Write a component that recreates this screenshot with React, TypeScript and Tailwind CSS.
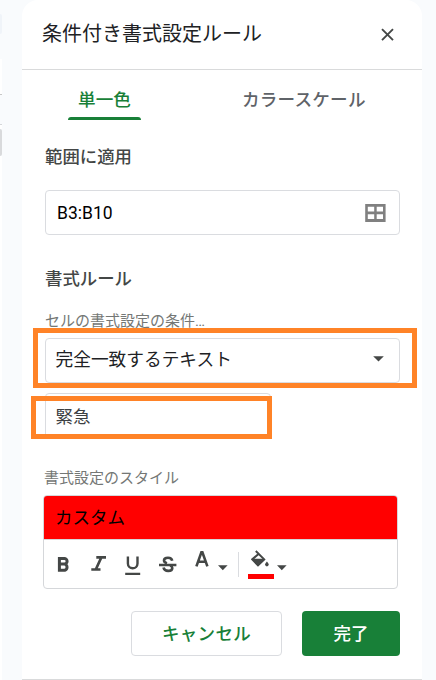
import React from "react";

function Caret() {
  return (
    <svg width="11" height="6" viewBox="0 0 11 6" className="shrink-0">
      <path d="M0.2 0.2H10.8L5.5 5.4Z" fill="#444746" />
    </svg>
  );
}

function SmallCaret() {
  return (
    <svg width="10" height="6" viewBox="0 0 10 6" className="shrink-0">
      <path d="M0 0.3H9.6L4.8 5.2Z" fill="#444746" />
    </svg>
  );
}

function GridIcon() {
  return (
    <svg width="21" height="18" viewBox="0 0 21 18" className="shrink-0">
      <path
        fillRule="evenodd"
        d="M0.2 0H20.6V18H0.2ZM2.8 2.8V7.6H9.2V2.8ZM11.7 2.8V7.6H18V2.8ZM2.8 10.2V15H9.2V10.2ZM11.7 10.2V15H18V10.2Z"
        fill="#808080"
      />
    </svg>
  );
}

function Toolbar() {
  return (
    <div className="flex h-[48px] items-start text-[#444746]">
      <svg width="13" height="15" viewBox="0 0 13 15" className="mt-[17px] ml-[13px]">
        <path d="M2.4 1.5H7.3A2.8 2.8 0 0 1 7.3 7.1H2.4ZM2.4 7.1H7.8A3.2 3.2 0 0 1 7.8 13.2H2.4Z" fill="none" stroke="currentColor" strokeWidth="3" />
      </svg>
      <svg width="15" height="15" viewBox="0 0 15 15" className="mt-[16px] ml-[21px]">
        <path d="M5.3 1.3H15M0.3 13.5H9.5M10.4 1.3L4.8 13.5" fill="none" stroke="currentColor" strokeWidth="2.7" />
      </svg>
      <svg width="16" height="19" viewBox="0 0 16 19" className="mt-[16px] ml-[19px]">
        <path d="M2.9 0.6V7.5A4.8 4.8 0 0 0 12.5 7.5V0.6" fill="none" stroke="currentColor" strokeWidth="2.4" />
        <path d="M0.2 17.8H15.2" stroke="currentColor" strokeWidth="2.2" />
      </svg>
      <svg width="18" height="17" viewBox="0 0 18 17" className="mt-[16px] ml-[18px]">
        <path d="M13.2 4.7C12.8 2.6 11.3 1.7 9 1.7C6.6 1.7 5 2.7 5 4.5C5 6 6.3 6.8 8 7.3M11.2 9.3C12.7 10.1 13.3 10.8 13.3 12C13.3 13.9 11.6 14.9 9.2 14.9C6.6 14.9 5 13.7 4.5 11.5" fill="none" stroke="currentColor" strokeWidth="2.6" />
        <path d="M0 9H17.4" stroke="currentColor" strokeWidth="2.3" />
      </svg>
      <svg width="14" height="16" viewBox="0 0 14 16" className="mt-[11px] ml-[18px]">
        <path d="M1.4 15.4L6.4 1.4H7.4L12.4 15.4M3 10.8H10.8" fill="none" stroke="currentColor" strokeWidth="2.6" />
      </svg>
      <div className="mt-[25px] ml-[9px]"><SmallCaret /></div>
      <div className="mt-[12px] ml-[10px] h-[25px] w-px bg-[#dadce0]" />
      <div className="mt-[10px] ml-[9px] flex h-[29px] w-[26px] flex-col justify-between">
        <svg width="20" height="18" viewBox="0 0 20 18" className="ml-[3px]">
          <path d="M4.8 1L13.2 9.4L7 15.3L1.2 9.4L7.8 3.8" fill="none" stroke="currentColor" strokeWidth="2" />
          <path d="M1 8.8H13.4L7 16Z" fill="currentColor" />
          <path d="M15.9 11.4C17.1 12.8 17.7 13.7 17.7 14.6A1.8 1.8 0 0 1 14.1 14.6C14.1 13.7 14.7 12.8 15.9 11.4Z" fill="currentColor" />
        </svg>
        <div className="h-[5px] bg-[#ff0000]" />
      </div>
      <div className="mt-[25px] ml-[3px]"><SmallCaret /></div>
    </div>
  );
}

export default function App() {
  return (
    <div
      className="flex h-[680px] w-[436px] overflow-hidden bg-[#f9fbfd] font-['Roboto','Noto_Sans_CJK_JP',sans-serif] text-[17.5px]"
      lang="ja"
    >
      <div className="mr-[20px] flex w-[2px] flex-col">
        <div className="mt-[14px] h-[20px] rounded-r-full bg-[#f0f4f9]" />
        <div className="mt-[25px] h-[36px] border-b border-[#c7c7c7] bg-white" />
        <div className="h-[30px] border-b border-[#d5d7da]" />
        <div className="h-[4px] bg-white" />
        <div className="h-[27px] rounded-r bg-[#d9dadc]" />
        <div className="flex-1 bg-white" />
      </div>

      <div className="flex w-[400px] flex-col rounded-t-[16px] border-b border-[#d9dadb] bg-white">
        <header className="flex h-[70px] items-center justify-between border-b border-[#d9dadb] pr-[28px] pl-[20px]">
          <h1 className="mb-[2px] text-[20px] leading-[30px] text-[#202124]">条件付き書式設定ルール</h1>
          <svg width="13" height="13" viewBox="0 0 13 13">
            <path d="M1 1.2L12 12.2M12 1.2L1 12.2" stroke="#444746" strokeWidth="1.9" />
          </svg>
        </header>

        <nav className="flex h-[50px] text-[17.6px] font-medium">
          <div className="ml-[46px] flex w-[73px] flex-col items-center justify-between text-[#188038]">
            <span className="mt-[17px] leading-[26px]">単一色</span>
            <div className="h-[3px] w-full rounded-t-[3px] bg-[#188038]" />
          </div>
          <span className="mt-[17px] ml-[101px] leading-[26px] tracking-[0.2px] text-[#5f6368]">カラースケール</span>
        </nav>

        <main className="flex flex-col pl-[23px]">
          <h2 className="mt-[24px] text-[17.4px] leading-[26px] font-medium text-[#444746]">範囲に適用</h2>
          <div className="mt-[20px] flex h-[45px] w-[355px] items-center justify-between rounded-[4px] border border-[#dadce0] pr-[13px] pl-[11px] text-black">
            <span className="mt-px">B3:B10</span>
            <GridIcon />
          </div>

          <h2 className="mt-[31px] text-[17.4px] leading-[26px] font-medium text-[#444746]">書式ルール</h2>
          <p className="mt-[18px] text-[15px] leading-[22px] text-[#747775]">
            セルの書式設定の条件<span className="tracking-[-0.8px]">...</span>
          </p>

          <div className="relative mt-[6px] flex h-[45px] w-[355px] items-center justify-between rounded-[4px] border border-[#dadce0] pr-[15px] pl-[9.5px] text-[#202124]">
            <span className="text-[17.7px]">完全一致するテキスト</span>
            <div className="mb-[3px] flex"><Caret /></div>
            <div className="absolute -top-[11px] -left-[13px] h-[60px] w-[384px] border-[5px] border-[#ff8327]" />
          </div>
          <div className="relative mt-[10px] flex h-[45px] w-[226px] items-center rounded-[4px] border border-[#dadce0] pl-[9.5px] text-[#3c4043]">
            <span className="mt-[3px]">緊急</span>
            <div className="absolute top-[2px] -left-[15px] h-[43px] w-[241px] border-[5px] border-[#ff8327]" />
          </div>

          <p className="-ml-px mt-[29px] text-[15px] leading-[22px] text-[#747775]">書式設定のスタイル</p>
          <div className="-ml-[2px] mt-[6px] h-[94px] w-[355px] overflow-hidden rounded-[4px] border border-[#d5d7da]">
            <div className="flex h-[44px] items-center border-b border-[#d5d7da] bg-[#ff0000] bg-clip-padding pl-[11px] text-black">
              <span className="mt-[2px]">カスタム</span>
            </div>
            <Toolbar />
          </div>

          <div className="mt-[22px] ml-[86px] flex gap-[20px] font-medium">
            <button className="h-[45px] w-[151px] rounded-[4px] border border-[#dadce0] pt-[2px] tracking-[0.3px] text-[#188038]">キャンセル</button>
            <button className="h-[45px] w-[98px] rounded-[4px] bg-[#188038] pt-[2px] text-white">完了</button>
          </div>
        </main>
      </div>
    </div>
  );
}
